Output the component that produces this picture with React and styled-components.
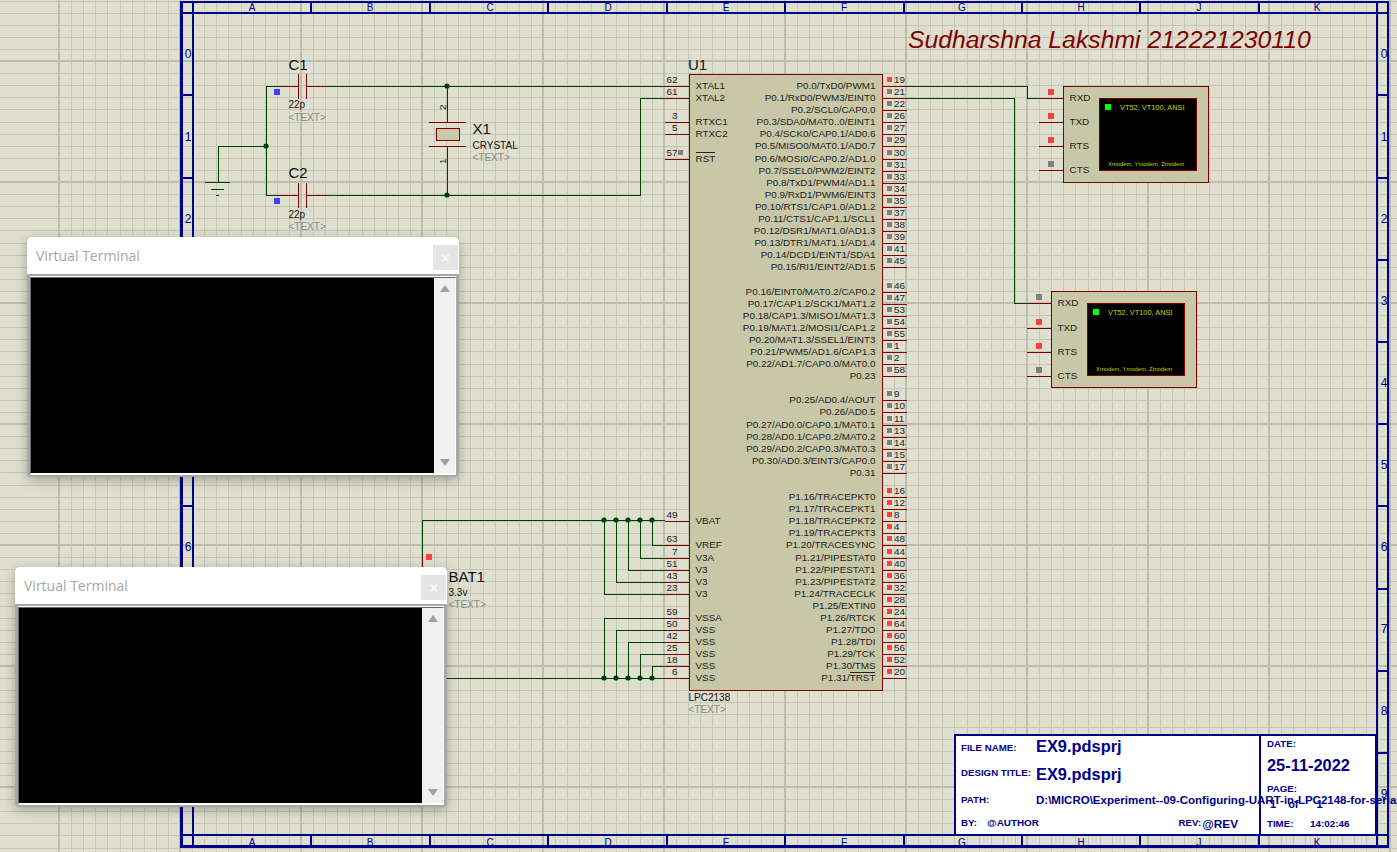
import React from 'react'
import styled, { createGlobalStyle } from 'styled-components'

const SANS = '"Liberation Sans", Arial, sans-serif'
const NAVY = '#00008b'
const WIRE = '#004000'
const LEAD = '#800000'
const PIN_PITCH = 12.09

const GlobalStyle = createGlobalStyle`
  html, body {
    margin: 0;
    padding: 0;
    overflow: hidden;
    background: #dfdfcf;
  }
`

const Sheet = styled.div`
  position: relative;
  width: 1397px;
  height: 852px;
  overflow: hidden;
  background: #dfdfcf;
  font-family: ${SANS};
`

const Drawing = styled.svg`
  display: block;
  font-family: ${SANS};
`

const GridLine = styled.line`
  stroke: ${props => (props.$major ? '#bdbdad' : '#c6c6b6')};
  stroke-width: ${props => (props.$major ? 2 : 1)};
  shape-rendering: crispEdges;
`

const FrameLine = styled.line`
  stroke: ${NAVY};
  stroke-width: ${props => props.$weight || 2};
  shape-rendering: crispEdges;
`

const FrameLabel = styled.text`
  font-size: 10px;
  fill: ${NAVY};
  text-anchor: middle;
`

const RowLabel = styled.text`
  font-size: 12px;
  fill: ${NAVY};
  text-anchor: middle;
`

const Heading = styled.text`
  font-size: 24.75px;
  font-style: italic;
  fill: #800000;
`

const Wire = styled.path`
  fill: none;
  stroke: ${WIRE};
  stroke-width: 1;
  shape-rendering: crispEdges;
`

const Lead = styled.path`
  fill: none;
  stroke: ${LEAD};
  stroke-width: 1;
  shape-rendering: crispEdges;
`

const Junction = styled.circle`
  fill: ${WIRE};
`

const Body = styled.rect`
  fill: #c8c8a8;
  stroke: ${LEAD};
  stroke-width: 1;
  shape-rendering: crispEdges;
`

const Display = styled.rect`
  fill: #000;
  stroke: ${LEAD};
  stroke-width: 1;
  shape-rendering: crispEdges;
`

const Led = styled.rect`
  fill: ${props => (props.$state === 'on' ? '#00ff00' : props.$state === 'high' ? '#ff4040' : props.$state === 'low' ? '#4040ff' : '#808080')};
`

const RefText = styled.text`
  font-size: 15px;
  fill: #111;
`

const ValueText = styled.text`
  font-size: 10px;
  fill: #111;
`

const GhostText = styled.text`
  font-size: 10px;
  fill: #8a8a8a;
`

const PinName = styled.text`
  font-size: 9.9px;
  fill: #222;
  text-anchor: ${props => props.$anchor || 'start'};
`

const PinNumber = styled.text`
  font-size: 9.9px;
  fill: #222;
  text-anchor: ${props => props.$anchor || 'start'};
`

const Overbar = styled.line`
  stroke: #222;
  stroke-width: 1;
  shape-rendering: crispEdges;
`

const ScreenTop = styled.text`
  font-size: 7.4px;
  fill: #d0d000;
`

const ScreenBottom = styled.text`
  font-size: 5.85px;
  fill: #d0d000;
`

// Title block of the sheet

const TitleBlock = styled.div`
  position: absolute;
  left: 954px;
  top: 734px;
  width: 423px;
  height: 102px;
  box-sizing: border-box;
  display: grid;
  grid-template-columns: 303px 1fr;
  background: #fff;
  border: 2px solid ${NAVY};
  color: ${NAVY};
  font-weight: 700;
  white-space: nowrap;
`

const TitleColumn = styled.div`
  display: flex;
  flex-direction: column;
  padding: ${props => props.$top}px 0 0 ${props => props.$inset}px;
  border-left: ${props => (props.$divided ? `2px solid ${NAVY}` : 'none')};
`

const TitleRow = styled.div`
  display: flex;
  align-items: flex-start;
  height: ${props => props.$height}px;
`

const FieldLabel = styled.span`
  width: ${props => props.$width || 'auto'};
  margin-top: ${props => props.$drop || 0}px;
  margin-left: ${props => props.$push || 0};
  font-size: 9.7px;
  line-height: 12px;
  flex: none;
`

const LargeValue = styled.span`
  font-size: 16.4px;
  line-height: 18px;
`

const SmallValue = styled.span`
  margin-top: ${props => props.$drop || 0}px;
  margin-left: ${props => props.$gap || 0}px;
  margin-right: ${props => props.$trail || 0}px;
  font-size: ${props => props.$size || 10}px;
  line-height: 12px;
`

// Virtual terminal popup

const Terminal = styled.div`
  position: absolute;
  left: ${props => props.$x}px;
  top: ${props => props.$y}px;
  width: 432px;
  height: 240px;
  box-sizing: border-box;
  display: flex;
  flex-direction: column;
  background: #fff;
  border-radius: 5px 5px 3px 3px;
  box-shadow: 0 3px 12px rgba(0, 0, 0, 0.28);
`

const TerminalBar = styled.div`
  height: 37px;
  flex: none;
  box-sizing: border-box;
  display: flex;
  align-items: flex-end;
  justify-content: space-between;
  padding: 0 1px 4px 9px;
`

const TerminalTitle = styled.span`
  font-family: "Open Sans", sans-serif;
  font-size: 14px;
  line-height: 25px;
  margin-bottom: 2px;
  color: #a6a6a6;
`

const CloseButton = styled.div`
  width: 25px;
  height: 25px;
  display: flex;
  align-items: center;
  justify-content: center;
  background: #e5e5e5;
  color: #fff;
  font-family: "Open Sans", sans-serif;
  font-size: 16px;
`

const TerminalFrame = styled.div`
  flex: 1;
  min-height: 0;
  display: flex;
  padding-top: 1px;
  background: #fff;
  border: 3px solid #a8a8a8;
  border-top-width: 2px;
  border-bottom-width: 2px;
  border-radius: 0 0 3px 3px;
`

const TerminalWell = styled.div`
  flex: 1;
  display: flex;
  border-style: solid;
  border-width: 1px 1px 2px 1px;
  border-color: #6a6a6a #fff #fff #6a6a6a;
`

const TerminalScreen = styled.div`
  flex: 1;
  background: #000;
`

const ScrollTrack = styled.div`
  width: 21px;
  box-sizing: border-box;
  display: flex;
  flex-direction: column;
  align-items: center;
  justify-content: space-between;
  padding: 7px 0;
  background: #f0f0f0;
`

const ScrollArrow = styled.div`
  width: 0;
  height: 0;
  border-left: 5px solid transparent;
  border-right: 5px solid transparent;
  ${props => (props.$down ? 'border-top: 7px solid #a0a0a0;' : 'border-bottom: 7px solid #a0a0a0;')}
`

// Sheet data

const range = (from, count, step) => Array.from({ length: count }, (_, i) => Math.round(from + i * step))

const minorX = range(59, 113, 12.1)
const minorY = range(61 - 60.5, 71, 12.1)
const majorX = range(59, 12, 121)
const majorY = range(61, 7, 121)

const columnTicks = [193, 311, 430, 548, 667, 785, 904, 1022, 1140, 1259, 1377]
const columnLetters = [
  ['A', 252], ['B', 370], ['C', 490], ['D', 608], ['E', 726],
  ['F', 844], ['G', 962], ['H', 1081], ['J', 1199], ['K', 1317],
]
const rowTicks = [95, 178, 260, 342, 424, 506, 589, 671, 753]
const rowLabelY = [54, 137, 219, 301, 383, 465, 547, 629, 711, 794]

const pinY = k => Math.round(86 + k * PIN_PITCH)

const rightPins = [
  [0, 'P0.0/TxD0/PWM1', '19', 'high'], [1, 'P0.1/RxD0/PWM3/EINT0', '21'], [2, 'P0.2/SCL0/CAP0.0', '22'],
  [3, 'P0.3/SDA0/MAT0..0/EINT1', '26'], [4, 'P0.4/SCK0/CAP0.1/AD0.6', '27'], [5, 'P0.5/MISO0/MAT0.1/AD0.7', '29'],
  [6, 'P0.6/MOSI0/CAP0.2/AD1.0', '30'], [7, 'P0.7/SSEL0/PWM2/EINT2', '31'], [8, 'P0.8/TxD1/PWM4/AD1.1', '33'],
  [9, 'P0.9/RxD1/PWM6/EINT3', '34'], [10, 'P0.10/RTS1/CAP1.0/AD1.2', '35'], [11, 'P0.11/CTS1/CAP1.1/SCL1', '37'],
  [12, 'P0.12/DSR1/MAT1.0/AD1.3', '38'], [13, 'P0.13/DTR1/MAT1.1/AD1.4', '39'], [14, 'P0.14/DCD1/EINT1/SDA1', '41'],
  [15, 'P0.15/RI1/EINT2/AD1.5', '45'],
  [17, 'P0.16/EINT0/MAT0.2/CAP0.2', '46'], [18, 'P0.17/CAP1.2/SCK1/MAT1.2', '47'], [19, 'P0.18/CAP1.3/MISO1/MAT1.3', '53'],
  [20, 'P0.19/MAT1.2/MOSI1/CAP1.2', '54'], [21, 'P0.20/MAT1.3/SSEL1/EINT3', '55'], [22, 'P0.21/PWM5/AD1.6/CAP1.3', '1'],
  [23, 'P0.22/AD1.7/CAP0.0/MAT0.0', '2'], [24, 'P0.23', '58'],
  [26, 'P0.25/AD0.4/AOUT', '9'], [27, 'P0.26/AD0.5', '10'], [28, 'P0.27/AD0.0/CAP0.1/MAT0.1', '11'],
  [29, 'P0.28/AD0.1/CAP0.2/MAT0.2', '13'], [30, 'P0.29/AD0.2/CAP0.3/MAT0.3', '14'], [31, 'P0.30/AD0.3/EINT3/CAP0.0', '15'],
  [32, 'P0.31', '17'],
  [34, 'P1.16/TRACEPKT0', '16', 'high'], [35, 'P1.17/TRACEPKT1', '12', 'high'], [36, 'P1.18/TRACEPKT2', '8', 'high'],
  [37, 'P1.19/TRACEPKT3', '4', 'high'], [38, 'P1.20/TRACESYNC', '48', 'high'], [39, 'P1.21/PIPESTAT0', '44', 'high'],
  [40, 'P1.22/PIPESTAT1', '40', 'high'], [41, 'P1.23/PIPESTAT2', '36', 'high'], [42, 'P1.24/TRACECLK', '32', 'high'],
  [43, 'P1.25/EXTIN0', '28', 'high'], [44, 'P1.26/RTCK', '24', 'high'], [45, 'P1.27/TDO', '64', 'high'],
  [46, 'P1.28/TDI', '60', 'high'], [47, 'P1.29/TCK', '56', 'high'], [48, 'P1.30/TMS', '52', 'high'],
  [49, 'P1.31/TRST', '20', 'high'],
]

const leftPins = [
  [0, 'XTAL1', '62'], [1, 'XTAL2', '61'], [3, 'RTXC1', '3'], [4, 'RTXC2', '5'], [6, 'RST', '57'],
  [36, 'VBAT', '49'], [38, 'VREF', '63'], [39, 'V3A', '7'], [40, 'V3', '51'], [41, 'V3', '43'], [42, 'V3', '23'],
  [44, 'VSSA', '59'], [45, 'VSS', '50'], [46, 'VSS', '42'], [47, 'VSS', '25'], [48, 'VSS', '18'], [49, 'VSS', '6'],
]

const busX = [604, 616, 628, 640, 652]

const SheetGrid = () => (
  <g>
    {minorX.map(x => <GridLine key={`x${x}`} x1={x} x2={x} y1={0} y2={852} />)}
    {minorY.map(y => <GridLine key={`y${y}`} y1={y} y2={y} x1={0} x2={1397} />)}
    {majorX.map(x => <GridLine $major key={`X${x}`} x1={x} x2={x} y1={0} y2={852} />)}
    {majorY.map(y => <GridLine $major key={`Y${y}`} y1={y} y2={y} x1={0} x2={1397} />)}
  </g>
)

const SheetFrame = () => (
  <g>
    <FrameLine $weight={3} x1={181.5} x2={181.5} y1={1} y2={847} />
    <FrameLine x1={193} x2={193} y1={1} y2={847} />
    <FrameLine x1={1377} x2={1377} y1={1} y2={847} />
    <FrameLine x1={1388} x2={1388} y1={1} y2={847} />
    <FrameLine x1={180} x2={1389} y1={2} y2={2} />
    <FrameLine x1={180} x2={1389} y1={13} y2={13} />
    <FrameLine x1={180} x2={1389} y1={835} y2={835} />
    <FrameLine $weight={3} x1={180} x2={1389} y1={846} y2={846} />
    {columnTicks.map(x => (
      <g key={x}>
        <FrameLine x1={x} x2={x} y1={2} y2={13} />
        <FrameLine x1={x} x2={x} y1={835} y2={846} />
      </g>
    ))}
    {columnLetters.map(([letter, x]) => (
      <g key={letter}>
        <FrameLabel x={x} y={11}>{letter}</FrameLabel>
        <FrameLabel x={x} y={846}>{letter}</FrameLabel>
      </g>
    ))}
    {rowTicks.map(y => (
      <g key={y}>
        <FrameLine x1={181} x2={193} y1={y} y2={y} />
        <FrameLine x1={1377} x2={1388} y1={y} y2={y} />
      </g>
    ))}
    {rowLabelY.map((y, i) => (
      <g key={y}>
        <RowLabel x={188} y={y + 4}>{i}</RowLabel>
        <RowLabel x={1384} y={y + 4}>{i}</RowLabel>
      </g>
    ))}
  </g>
)

const Capacitor = ({ name, y, refY, valueY, ghostY }) => (
  <g>
    <Lead d={`M277 ${y}H298M306 ${y}H327M298 ${y - 12}V${y + 13}M306 ${y - 12}V${y + 13}`} />
    <Led $state="low" x={274} y={y + 3} width={6} height={6} />
    <RefText x={288.5} y={refY}>{name}</RefText>
    <ValueText x={288.5} y={valueY}>22p</ValueText>
    <GhostText x={288.5} y={ghostY}>{'<TEXT>'}</GhostText>
  </g>
)

const Crystal = () => (
  <g>
    <Lead d="M447 100V122M429 122H466M429 146H466M447 146V170" />
    <Body x={436} y={128} width={23} height={12} />
    <PinNumber x={0} y={0} transform="translate(445.5 110) rotate(-90)">2</PinNumber>
    <PinNumber x={0} y={0} transform="translate(445.5 164) rotate(-90)">1</PinNumber>
    <RefText x={472.5} y={134}>X1</RefText>
    <ValueText x={472.5} y={149}>CRYSTAL</ValueText>
    <GhostText x={472.5} y={161}>{'<TEXT>'}</GhostText>
  </g>
)

const Chip = () => (
  <g>
    {rightPins.map(([k, name, num, state]) => (
      <g key={num}>
        <Lead d={`M882 ${pinY(k)}H907`} />
        <Led $state={state} x={887} y={pinY(k) - 9} width={5} height={5} />
        <PinNumber x={894} y={pinY(k) - 3}>{num}</PinNumber>
      </g>
    ))}
    {leftPins.map(([k, , num]) => (
      <g key={num}>
        <Lead d={`M665 ${pinY(k)}H689`} />
        <PinNumber $anchor="end" x={677.5} y={pinY(k) - 3}>{num}</PinNumber>
      </g>
    ))}
    <Led x={678} y={150} width={5} height={5} />
    <Body x={689} y={74} width={193} height={616} />
    {rightPins.map(([k, name]) => (
      <PinName key={name} $anchor="end" x={875.5} y={pinY(k) + 3}>{name}</PinName>
    ))}
    {leftPins.map(([k, name]) => (
      <PinName key={k} x={695.5} y={pinY(k) + 3}>{name}</PinName>
    ))}
    <Overbar x1={696} x2={715} y1={152.5} y2={152.5} />
    <Overbar x1={850} x2={875} y1={672.5} y2={672.5} />
    <RefText x={688} y={70}>U1</RefText>
    <ValueText x={688.5} y={701}>LPC2138</ValueText>
    <GhostText x={688.5} y={713}>{'<TEXT>'}</GhostText>
  </g>
)

const TerminalSymbol = ({ x, y, rows, states, labelX }) => (
  <g>
    {rows.map((rowY, i) => (
      <g key={rowY}>
        <Lead d={`M${x - 24} ${rowY}H${x}`} />
        <Led $state={states[i]} x={x - 15} y={rowY - 9} width={6} height={6} />
      </g>
    ))}
    <Body x={x} y={y} width={145} height={96} />
    {rows.map((rowY, i) => (
      <PinName key={i} x={labelX} y={rowY + 3}>{['RXD', 'TXD', 'RTS', 'CTS'][i]}</PinName>
    ))}
    <Display x={x + 36} y={y + 12} width={97} height={72} />
    <Led $state="on" x={x + 42} y={y + 18} width={6} height={6} />
    <ScreenTop x={x + 57} y={y + 24}>VT52, VT100, ANSI</ScreenTop>
    <ScreenBottom x={x + 45} y={y + 80}>Xmodem, Ymodem, Zmodem</ScreenBottom>
  </g>
)

const Nets = () => (
  <g>
    <Wire d="M266 86V195M277 86H266M277 195H266M327 86H665M327 195H640V98H665" />
    <Wire d="M266 146H218V182M205 182H230M211 189H224M216 195H219" />
    <Wire d="M447 86V100M447 170V195" />
    <Wire d="M907 86H1027V98H1039M907 98H1014.5V303H1027" />
    <Wire d="M422 557V520H665" />
    <Wire d={`M447 ${pinY(49)}H665`} />
    {[38, 39, 40, 41, 42].map((k, i) => <Wire key={k} d={`M${busX[4 - i]} 520V${pinY(k)}H665`} />)}
    {[44, 45, 46, 47, 48].map((k, i) => <Wire key={k} d={`M${busX[i]} ${pinY(49)}V${pinY(k)}H665`} />)}
    {busX.map(x => (
      <g key={x}>
        <Junction cx={x} cy={520} r={2.6} />
        <Junction cx={x} cy={pinY(49)} r={2.6} />
      </g>
    ))}
    <Junction cx={266} cy={146} r={2.6} />
    <Junction cx={447} cy={86} r={2.6} />
    <Junction cx={447} cy={195} r={2.6} />
  </g>
)

const Battery = () => (
  <g>
    <Lead d="M422 557V570" />
    <Led $state="high" x={426} y={554} width={6} height={6} />
    <RefText x={448.5} y={582}>BAT1</RefText>
    <ValueText x={448.5} y={596}>3.3v</ValueText>
    <GhostText x={448.5} y={608}>{'<TEXT>'}</GhostText>
  </g>
)

const VirtualTerminal = ({ x, y }) => (
  <Terminal $x={x} $y={y}>
    <TerminalBar>
      <TerminalTitle>Virtual Terminal</TerminalTitle>
      <CloseButton>×</CloseButton>
    </TerminalBar>
    <TerminalFrame>
      <TerminalWell>
        <TerminalScreen />
        <ScrollTrack>
          <ScrollArrow />
          <ScrollArrow $down />
        </ScrollTrack>
      </TerminalWell>
    </TerminalFrame>
  </Terminal>
)

const SheetTitle = () => (
  <TitleBlock>
    <TitleColumn $top={1} $inset={5}>
      <TitleRow $height={28}>
        <FieldLabel $width="75px" $drop={5}>FILE NAME:</FieldLabel>
        <LargeValue>EX9.pdsprj</LargeValue>
      </TitleRow>
      <TitleRow $height={29}>
        <FieldLabel $width="75px" $drop={2}>DESIGN TITLE:</FieldLabel>
        <LargeValue>EX9.pdsprj</LargeValue>
      </TitleRow>
      <TitleRow $height={23}>
        <FieldLabel $width="75px">PATH:</FieldLabel>
        <SmallValue $size={11.5}>D:\MICRO\Experiment--09-Configuring-UART-in-LPC2148-for-serial</SmallValue>
      </TitleRow>
      <TitleRow $height={19}>
        <FieldLabel $width="26px">BY:</FieldLabel>
        <SmallValue $size={9.9}>@AUTHOR</SmallValue>
        <FieldLabel $push="auto">REV:</FieldLabel>
        <SmallValue $size={11.8} $drop={1} $gap={1} $trail={21}>@REV</SmallValue>
      </TitleRow>
    </TitleColumn>
    <TitleColumn $divided $top={2} $inset={6}>
      <TitleRow $height={18}><FieldLabel>DATE:</FieldLabel></TitleRow>
      <TitleRow $height={27}><LargeValue>25-11-2022</LargeValue></TitleRow>
      <TitleRow $height={15}><FieldLabel>PAGE:</FieldLabel></TitleRow>
      <TitleRow $height={20}>
        <SmallValue $gap={3} $size={11}>1</SmallValue>
        <SmallValue $gap={12} $size={11}>of</SmallValue>
        <SmallValue $gap={18} $size={11}>1</SmallValue>
      </TitleRow>
      <TitleRow $height={16}>
        <FieldLabel $width="43px">TIME:</FieldLabel>
        <SmallValue $size={9.9}>14:02:46</SmallValue>
      </TitleRow>
    </TitleColumn>
  </TitleBlock>
)

export default function App() {
  return (
    <Sheet>
      <GlobalStyle />
      <Drawing width="1397" height="852" viewBox="0 0 1397 852">
        <SheetGrid />
        <SheetFrame />
        <Heading x={908} y={48}>Sudharshna Lakshmi 212221230110</Heading>
        <Nets />
        <Capacitor name="C1" y={86} refY={70} valueY={108} ghostY={121} />
        <Capacitor name="C2" y={195} refY={178} valueY={218} ghostY={230} />
        <Crystal />
        <Chip />
        <Battery />
        <TerminalSymbol x={1063} y={86} labelX={1069.5} rows={[98, 122, 146, 170]} states={['high', 'high', 'high']} />
        <TerminalSymbol x={1051} y={291} labelX={1057.5} rows={[303, 328, 352, 376]} states={[undefined, 'high', 'high']} />
      </Drawing>
      <SheetTitle />
      <VirtualTerminal x={27} y={237} />
      <VirtualTerminal x={15} y={567} />
    </Sheet>
  )
}
